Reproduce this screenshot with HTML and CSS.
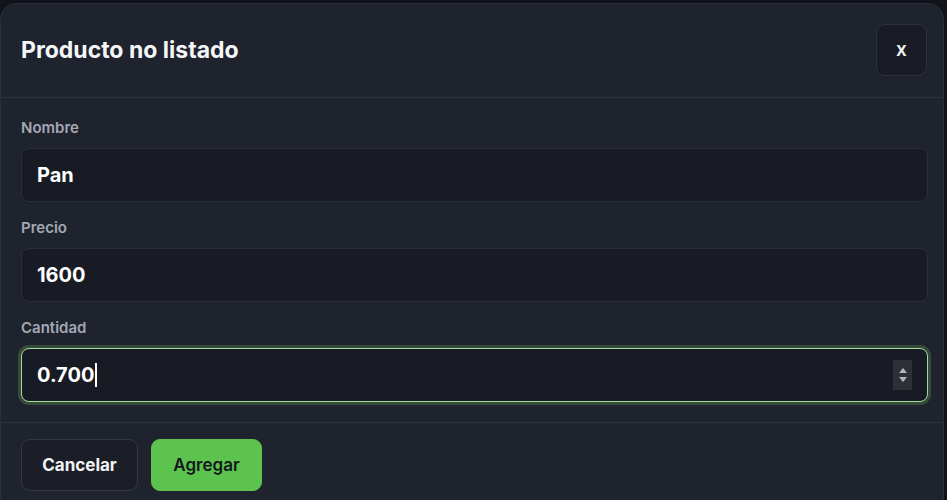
FILE: index.html
```html
<!DOCTYPE html>
<html lang="es">
<head>
<meta charset="utf-8">
<title>Producto no listado</title>
<link rel="stylesheet" href="styles.css">
</head>
<body>
<div class="modal">
  <div class="modal-header">
    <h2 class="modal-title">Producto no listado</h2>
    <button class="close-btn" type="button">x</button>
  </div>
  <div class="modal-body">
    <div class="field">
      <label class="label">Nombre</label>
      <div class="input">Pan</div>
    </div>
    <div class="field">
      <label class="label">Precio</label>
      <div class="input">1600</div>
    </div>
    <div class="field">
      <label class="label">Cantidad</label>
      <div class="input focused">
        <span class="value">0.700</span><span class="caret"></span>
        <span class="spinner">
          <svg width="12" height="24" viewBox="0 0 12 24"><path d="M2 10 L6 5 L10 10 Z" fill="#b4b6bb"/><path d="M2 14 L10 14 L6 19 Z" fill="#b4b6bb"/></svg>
        </span>
      </div>
    </div>
  </div>
  <div class="modal-footer">
    <button class="btn btn-cancel" type="button">Cancelar</button>
    <button class="btn btn-primary" type="button">Agregar</button>
  </div>
</div>
</body>
</html>
```

FILE: styles.css
```css
* { box-sizing: border-box; }
html, body { margin: 0; padding: 0; }
body {
  background: #10131a;
  font-family: Inter, "Noto Sans", sans-serif;
  color: #fff;
  height: 500px;
  overflow: hidden;
  padding-top: 3px;
}
.modal {
  width: 944px;
  height: 520px;
  background: #1f232e;
  border: 1px solid #2a2e39;
  border-radius: 16px 16px 0 0;
}
.modal-header {
  display: flex;
  align-items: center;
  justify-content: space-between;
  padding: 20px 16px 21px 20px;
  border-bottom: 1px solid #2e323d;
}
.modal-title {
  margin: 0;
  font-size: 23px;
  font-weight: 700;
  letter-spacing: 0;
  color: #f5f6f8;
}
.close-btn {
  width: 51px;
  height: 52px;
  background: #191c24;
  border: 1px solid #2d313b;
  border-radius: 9px;
  color: #f2f3f5;
  font-family: Inter, sans-serif;
  font-size: 19px;
  font-weight: 600;
  padding: 0 0 2px;
}
.modal-body {
  padding: 20px 15px 20px 20px;
  display: flex;
  flex-direction: column;
  gap: 16px;
  border-bottom: 1px solid #2e323d;
}
.field { display: flex; flex-direction: column; gap: 10px; }
.label {
  font-size: 15px;
  line-height: 20px;
  font-weight: 600;
  color: #a3a8b4;
}
.input {
  height: 54px;
  background: #181b23;
  border: 1px solid #2a2e38;
  border-radius: 8px;
  padding: 0 15px;
  display: flex;
  align-items: center;
  font-size: 20px;
  font-weight: 700;
  color: #fff;
}
.input.focused {
  border-color: #a6d8a0;
  box-shadow: 0 0 0 3px #354c38;
}
.caret {
  display: inline-block;
  width: 1.5px;
  height: 24px;
  background: #fff;
  margin-left: 1px;
}
.spinner {
  margin-left: auto;
  margin-right: 0;
  width: 19px;
  height: 30px;
  background: #2d3037;
  display: flex;
  align-items: center;
  justify-content: center;
}
.modal-footer {
  display: flex;
  gap: 13px;
  padding: 16px 20px;
}
.btn {
  height: 52px;
  border-radius: 9px;
  font-family: Inter, sans-serif;
  font-size: 17px;
  font-weight: 700;
  padding: 0;
}
.btn-cancel {
  width: 117px;
  background: #1b1e27;
  border: 1px solid #343844;
  color: #f2f3f5;
}
.btn-primary {
  width: 111px;
  background: #5bc34e;
  border: 1px solid #5bc34e;
  color: #14171c;
  font-weight: 600;
}
```
